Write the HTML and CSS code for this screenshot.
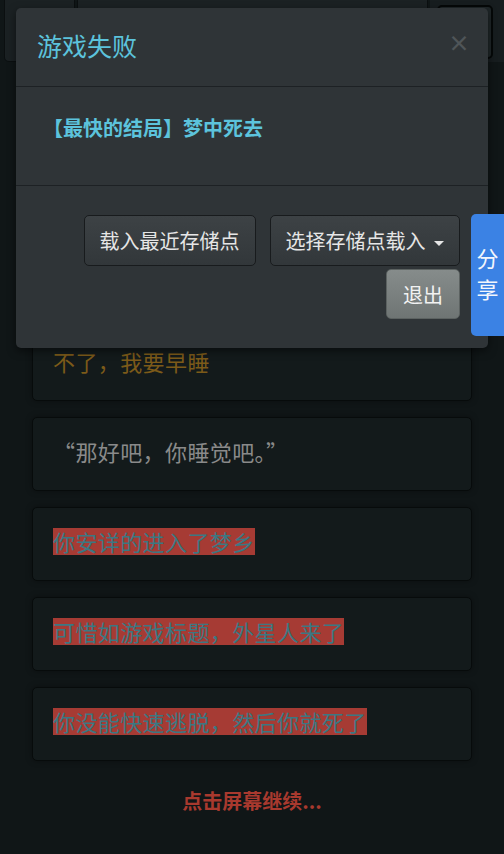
FILE: index.html
```html
<!DOCTYPE html>
<html lang="zh-CN">
<head>
  <meta charset="UTF-8">
  <meta name="viewport" content="width=device-width, initial-scale=1.0">
  <title>游戏失败</title>
  <link rel="stylesheet" href="styles.css">
</head>
<body>
  <div class="navbar">
    <div class="nav-left"></div>
    <div class="nav-mid"></div>
    <div class="nav-right"><div class="nav-btn"></div></div>
  </div>

  <div class="story">
    <div class="card choice">不了，我要早睡</div>
    <div class="card speech">“那好吧，你睡觉吧。”</div>
    <div class="card"><span class="mark">你安详的进入了梦乡</span></div>
    <div class="card"><span class="mark">可惜如游戏标题，外星人来了</span></div>
    <div class="card"><span class="mark">你没能快速逃脱，然后你就死了</span></div>
    <p class="continue">点击屏幕继续...</p>
  </div>

  <div class="modal">
    <div class="modal-header">
      <h4 class="modal-title">游戏失败</h4>
      <span class="close">&times;</span>
    </div>
    <div class="modal-body">
      <strong>【最快的结局】梦中死去</strong>
    </div>
    <div class="modal-footer">
      <button class="btn">载入最近存储点</button>
      <button class="btn">选择存储点载入 <span class="caret"></span></button>
      <button class="btn btn-quit">退出</button>
    </div>
  </div>

  <div class="share-tab">分<br>享</div>
</body>
</html>
```

FILE: styles.css
```css
body {
  margin: 0;
  background-color: #101617;
  font-family: "Noto Sans CJK SC", "Noto Sans", sans-serif;
  color: #8c8c8c;
}
.navbar {
  display: flex;
  height: 62px;
  gap: 2px;
  padding: 0 0 0 4px;
}
.nav-left {
  width: 69px;
  background-color: #1b2123;
  border: 1px solid #0b0f10;
  border-top: none;
  border-radius: 0 0 5px 5px;
}
.nav-mid {
  flex: 1;
  background-color: #1b2123;
  border: 1px solid #0b0f10;
  border-top: none;
}
.nav-right {
  width: 74px;
  background-color: #171d1f;
  padding: 5px 11px 7px 7px;
  box-sizing: border-box;
}
.nav-btn {
  height: 100%;
  border: 2px solid #050808;
  border-radius: 5px;
  background-color: #1f2628;
}
.story {
  padding: 265px 32px 40px;
}
.card {
  background-color: #131a1b;
  border: 1px solid #070b0b;
  border-radius: 5px;
  padding: 20px 20px 25px;
  margin-bottom: 16px;
  font-size: 22px;
  letter-spacing: 0.4px;
  line-height: 27px;
  color: #8a8a8a;
  box-shadow: 0 0 6px rgba(0, 0, 0, 0.35);
}
.card.choice {
  color: #7c5a19;
}
.mark {
  display: inline-block;
  background-color: #a63b34;
  color: #3b7883;
}
.continue {
  margin: 28px 0 0;
  text-align: center;
  font-size: 20px;
  font-weight: bold;
  line-height: 24px;
  color: #a8392e;
}
.modal {
  position: absolute;
  top: 8px;
  left: 16px;
  width: 472px;
  background-color: #2f3437;
  border-radius: 5px;
  box-shadow: 0 3px 8px rgba(0, 0, 0, 0.5);
}
.modal-header {
  height: 79px;
  box-sizing: border-box;
  display: flex;
  align-items: flex-start;
  justify-content: space-between;
  padding: 19px 18px 0 21px;
  border-bottom: 1px solid #1d2124;
}
.modal-title {
  margin: 0;
  font-size: 25px;
  line-height: 36px;
  font-weight: normal;
  color: #5cc3dc;
}
.close {
  margin-top: 3px;
  font-size: 22px;
  line-height: 22px;
  font-weight: bold;
  color: #4f5558;
}
.modal-body {
  height: 99px;
  box-sizing: border-box;
  padding: 27px 0 0 27px;
  border-bottom: 1px solid #1d2124;
  font-size: 20px;
  line-height: 28px;
  color: #5cc3dc;
}
.modal-footer {
  display: flex;
  flex-wrap: wrap;
  justify-content: flex-end;
  column-gap: 14px;
  row-gap: 3px;
  padding: 29px 28px 29px;
}
.btn {
  height: 51px;
  padding: 0 15px;
  font-family: inherit;
  font-size: 20px;
  color: #e6e6e6;
  background: linear-gradient(#3d4245, #32373a);
  border: 1px solid #181b1d;
  border-radius: 5px;
}
.btn-quit {
  height: 50px;
  padding: 0 16px;
  color: #f2f2f2;
  background: linear-gradient(#868c8b, #6f7574);
  border-color: #5c6261;
}
.caret {
  display: inline-block;
  width: 0;
  height: 0;
  margin-left: 4px;
  vertical-align: middle;
  border-top: 5px solid #e6e6e6;
  border-left: 5px solid transparent;
  border-right: 5px solid transparent;
}
.share-tab {
  position: fixed;
  top: 214px;
  right: 0;
  width: 33px;
  height: 122px;
  box-sizing: border-box;
  padding-top: 28px;
  background-color: #3b82e4;
  border-radius: 5px 0 0 5px;
  color: #f2f6fc;
  font-size: 22px;
  line-height: 31px;
  text-align: center;
}
```
